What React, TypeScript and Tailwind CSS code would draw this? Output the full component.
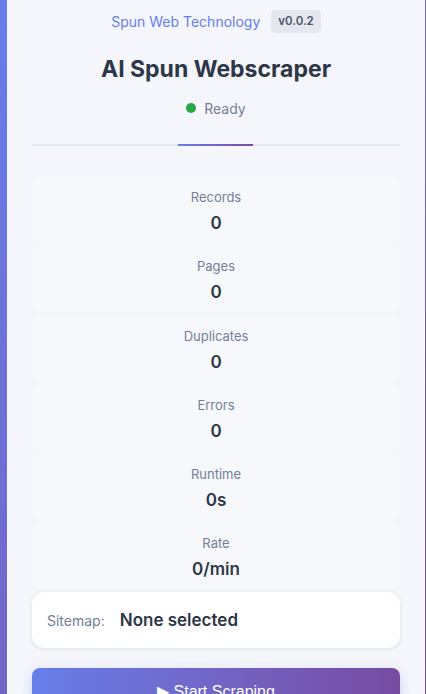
const stats = [
  { label: "Records", value: "0" },
  { label: "Pages", value: "0" },
  { label: "Duplicates", value: "0" },
  { label: "Errors", value: "0" },
  { label: "Runtime", value: "0s" },
  { label: "Rate", value: "0/min" },
];

export default function App() {
  return (
    <div className="min-h-screen bg-gradient-to-br from-[#667eea] to-[#764ba2] pl-[7px] pr-[1px] font-['Inter','Noto_Sans',sans-serif]">
      <div className="min-h-screen bg-[#f5f6fb] px-[25px] pt-[10px] pb-6">
        <header className="flex flex-col items-center">
          <div className="flex items-center gap-[11px] h-[23px]">
            <span className="text-[14px] text-[#667eea]">Spun Web Technology</span>
            <span className="rounded-[4px] bg-[#e4e7ee] px-[7px] h-[23px] flex items-center text-[11.5px] font-semibold text-[#4a5568]">
              v0.0.2
            </span>
          </div>
          <h1 className="mt-[20px] text-[23px] leading-[32px] font-bold text-[#2d3748]">AI Spun Webscraper</h1>
          <div className="mt-[13px] flex items-center gap-[8px] h-[20px]">
            <span className="w-[10px] h-[10px] rounded-full bg-[#28a745]" />
            <span className="text-[14px] text-[#718096]">Ready</span>
          </div>
        </header>

        <div className="mt-[26px] h-[2px] bg-[#e2e8f0] flex">
          <div className="ml-[146px] w-[75px] h-full bg-gradient-to-r from-[#667eea] to-[#764ba2]" />
        </div>

        <div className="mt-[30px] flex flex-col gap-[2.3px]">
          {stats.map((s) => (
            <div key={s.label} className="rounded-[8px] bg-[#f7f8fc] pt-[11px] pb-[8px] text-center">
              <div className="text-[13px] leading-[20px] text-[#718096]">{s.label}</div>
              <div className="mt-[4px] text-[17px] leading-[24px] font-semibold text-[#2d3748]">{s.value}</div>
            </div>
          ))}
        </div>

        <div className="mt-[3px] h-[56px] rounded-[12px] bg-white shadow-[0_1px_4px_rgba(0,0,0,0.1)] flex items-center px-[15px] gap-[15px]">
          <span className="text-[14px] text-[#718096]">Sitemap:</span>
          <span className="text-[17px] font-semibold text-[#2d3748]">None selected</span>
        </div>

        <button className="mt-[20px] w-full h-[48px] rounded-[8px] bg-gradient-to-r from-[#667eea] to-[#764ba2] text-white text-[16px] font-['Liberation_Sans',Arial,sans-serif] shadow-[0_4px_12px_rgba(102,126,234,0.3)]">
          ▶ Start Scraping
        </button>
      </div>
    </div>
  );
}
